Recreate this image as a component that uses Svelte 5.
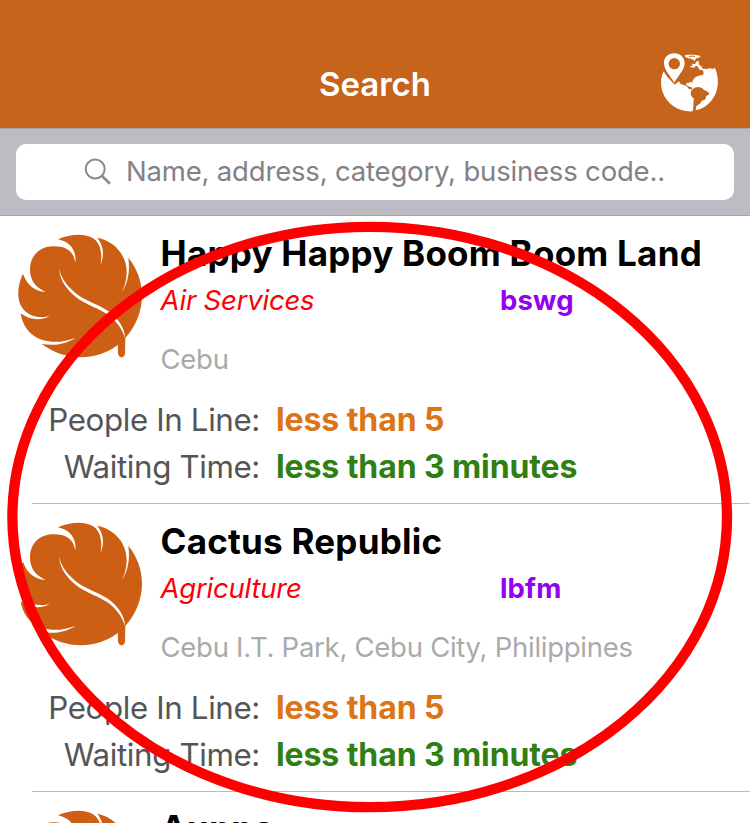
<script>
  const businesses = [
    { name: 'Happy Happy Boom Boom Land', category: 'Air Services', code: 'bswg', address: 'Cebu', line: 'less than 5', wait: 'less than 3 minutes' },
    { name: 'Cactus Republic', category: 'Agriculture', code: 'lbfm', address: 'Cebu I.T. Park, Cebu City, Philippines', line: 'less than 5', wait: 'less than 3 minutes' },
    { name: 'Auppa' }
  ];
</script>

<div class="screen">
  <header>
    <h1>Search</h1>
    <svg class="globe" viewBox="56 32 184 184" aria-label="Map">
      <path fill="#fff" d="M70 93 C60 113 60 137 68 158 C82 193 117 216 157 213 L159 199 C160 188 159 180 161 175 C155 171 150 164 151 157 L155 148 L145 145 L139 137 L121 131 L116 123 L103 133 C89 118 76 106 70 93Z" />
      <path fill="#fff" d="M188 104 L190 98 L197 90 L202 87 L206 83 L216 86 L224 83 C233 103 236 129 229 151 C220 180 198 203 166 210 L168 198 L180 189 L184 181 L194 178 L198 168 L207 161 L203 154 L191 149 L185 143 L174 140 L162 142 L156 148 L155 141 L149 140 L138 134 L138 128 L145 129 L150 124 L156 127 C157 114 169 105 188 104Z" />
      <path fill="#fff" d="M134 44 C151 42 168 43 182 47 L175 52 L168 54 L163 61 L153 55 L144 54 L134 49Z" />
      <path d="M146 49 C152 47 158 47 164 49" fill="none" stroke="#c6641c" stroke-width="3" />
      <path fill="#fff" d="M167 64 L176 62 L175 71 L184 79 L187 85 L203 86 L200 99 L190 98 L188 90 L178 88 L171 78 L166 76 L162 82 L151 81 L150 77 L157 76 L155 70 L165 71Z" />
      <path fill="#fff" fill-rule="evenodd" d="M102 39 C82 39 70 52 71 70 C72 90 91 107 102 127 C113 107 133 88 133 69 C133 52 120 39 102 39Z M102 53 A17 17 0 1 1 102 87 A17 17 0 1 1 102 53Z" />
    </svg>
  </header>

  <div class="searchbar">
    <div class="field">
      <svg viewBox="0 0 28 28" fill="none" stroke="#8a8a8f">
        <circle cx="11.2" cy="11" r="9.5" stroke-width="2" />
        <path d="M18 18 L26 25.8" stroke-width="2.6" />
      </svg>
      <span>Name, address, category, business code..</span>
    </div>
  </div>

  <main>
    {#each businesses as b}
      <article>
        <div class="top">
          <svg class="leaf" viewBox="48 24 384 384">
            <path fill="#cd5f14" d="M174 43 C211 27 253 24 281 41 C300 53 308 83 302 120 C312 93 313 65 292 38 C346 49 382 93 380 146 C379 166 374 184 366 201 C382 176 391 143 385 98 C411 130 426 169 426 211 C426 261 407 304 376 339 L375 384 C375 401 355 401 354 385 L353 360 C285 411 194 408 125 357 C166 363 199 357 227 338 C193 352 158 354 127 345 C91 333 67 304 62 265 C88 285 120 288 149 274 C119 280 91 275 72 255 C47 228 52 180 69 146 C80 178 103 200 138 200 C112 192 88 168 90 129 C93 85 125 64 161 64 C202 64 220 80 226 112 C230 78 212 51 174 43Z" />
            <path fill="#fff" d="M177 130 C184 161 199 181 226 204 C264 235 318 241 350 281 C366 300 374 318 376 340 C365 310 348 285 321 267 C282 242 247 237 213 203 C191 181 180 160 177 130Z" />
          </svg>
          <div class="info">
            <h2>{b.name}</h2>
            {#if b.category}
              <div class="meta"><em>{b.category}</em><strong>{b.code}</strong></div>
              <p>{b.address}</p>
            {/if}
          </div>
        </div>
        {#if b.line}
          <div class="stat"><span>People In Line:</span><b class="line">{b.line}</b></div>
          <div class="stat"><span>Waiting Time:</span><b>{b.wait}</b></div>
        {/if}
      </article>
    {/each}
  </main>

  <svg class="marker" viewBox="0 0 750 823">
    <ellipse cx="369.7" cy="517" rx="357.3" ry="290.2" fill="none" stroke="#f00" stroke-width="10.3" />
  </svg>
</div>

<style>
  :global(body) { margin: 0; }
  .screen { position: relative; width: 750px; height: 823px; overflow: hidden; background: #fff; font-family: Inter, "Liberation Sans", sans-serif; }
  header { height: 128px; box-sizing: border-box; padding-top: 40px; background: #c6641c; display: grid; grid-template-columns: 90px 1fr 90px; align-items: center; }
  h1 { grid-column: 2; margin: 0; color: #fff; text-align: center; font-size: 33px; font-weight: 600; letter-spacing: -0.05px; line-height: 88px; }
  .globe { width: 61.3px; height: 61.3px; margin-left: -1.2px; margin-top: -5.5px; }
  .searchbar { height: 88px; box-sizing: border-box; padding: 15px 16px; background: #bdbcc2; border-top: 1px solid #a5a4a9; border-bottom: 1px solid #a5a4a9; }
  .field { height: 56px; border-radius: 10px; background: #fff; display: flex; align-items: center; padding-left: 68px; color: #818186; }
  .field svg { width: 28px; height: 28px; margin-right: 14px; flex: none; }
  .field span { font-size: 27.5px; line-height: 54px; height: 56px; letter-spacing: -0.18px; white-space: nowrap; }
  article { height: 288px; box-sizing: border-box; background: linear-gradient(#bbb, #bbb) 32px 287px / 718px 1px no-repeat; }
  .top { display: flex; height: 181px; }
  .leaf { width: 128px; height: 128px; margin: 17px 16.5px 0 16px; flex: none; }
  .info { flex: 1; white-space: nowrap; }
  h2 { margin: 15px 0 0; font-size: 35px; line-height: 44px; font-weight: 700; letter-spacing: 0.24px; color: #000; }
  article:last-child h2 { margin-top: 14px; }
  .meta { display: flex; height: 34px; margin-top: 8px; font-size: 27.5px; line-height: 34px; }
  em { width: 339.5px; color: #fb0007; letter-spacing: -0.2px; }
  strong { color: #9400f0; font-weight: 700; letter-spacing: 0.15px; }
  p { margin: 25px 0 0; font-size: 27.5px; line-height: 34px; letter-spacing: -0.27px; color: #aaa; }
  .stat { display: flex; gap: 16px; height: 47px; line-height: 47px; font-size: 32px; color: #555; }
  .stat span { width: 260px; text-align: right; font-size: 31.3px; letter-spacing: -0.37px; }
  b { font-weight: 700; line-height: 45px; letter-spacing: -0.1px; color: #2f8012; }
  .line { color: #dc7518; }
  .marker { position: absolute; inset: 0; width: 750px; height: 823px; pointer-events: none; }
</style>
